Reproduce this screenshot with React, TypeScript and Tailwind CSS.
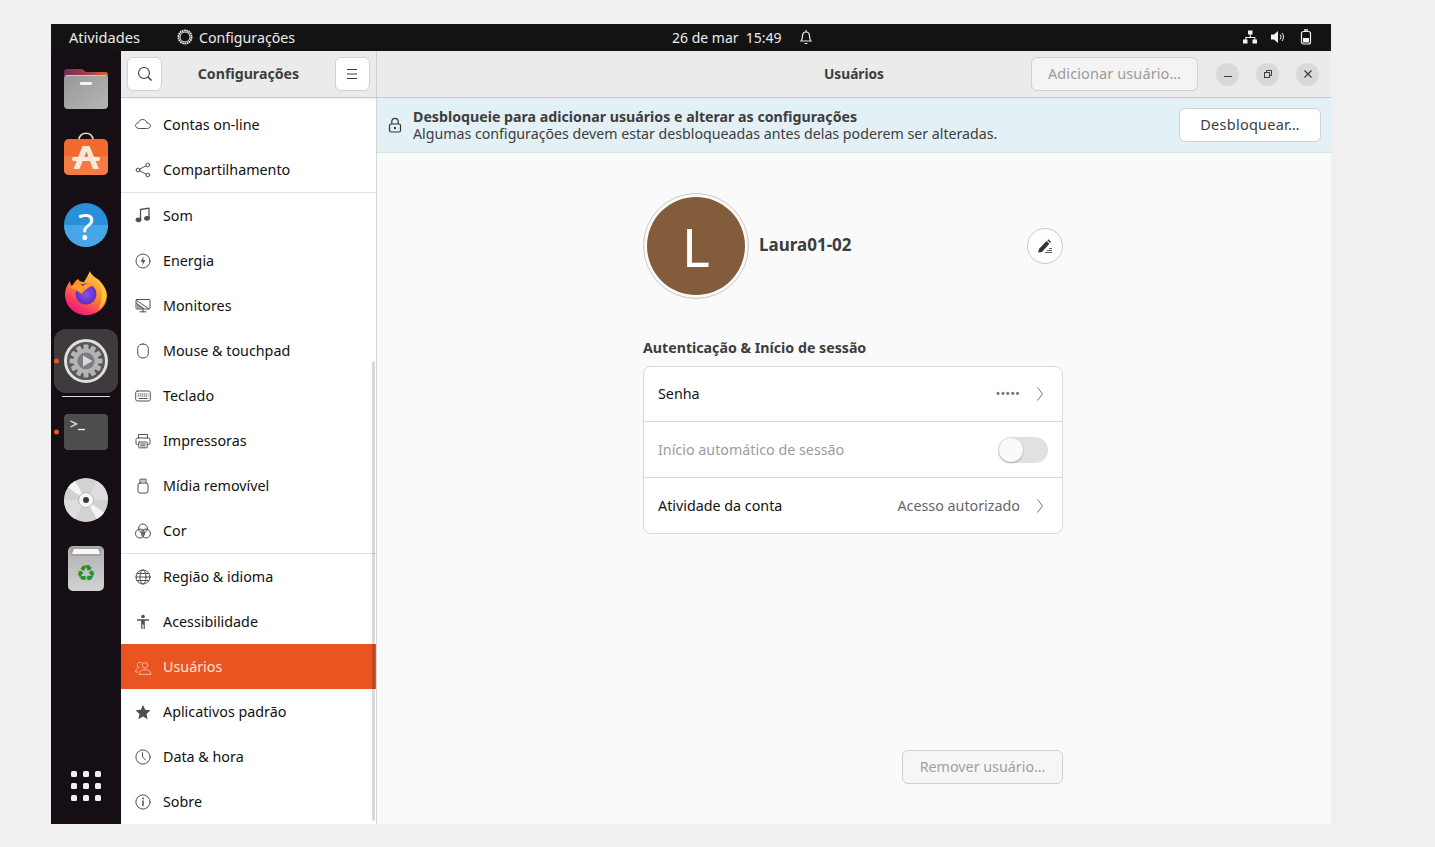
import React from 'react';

const stroke = { fill: 'none', stroke: 'currentColor', strokeWidth: 1, strokeLinecap: 'round', strokeLinejoin: 'round' } as const;

const Ico: React.FC<{ children: React.ReactNode; className?: string }> = ({ children, className }) => (
  <svg viewBox="0 0 16 16" className={className ?? 'w-4 h-4 overflow-visible'} {...stroke}>{children}</svg>
);

const icons: Record<string, React.ReactNode> = {
  cloud: <path d="M4.200 11.500C2.400 11.500.6 10.500.6 8.600c0-1.600 1.200-2.600 2.600-2.700C3.800 3.900 5.500 2.500 7.600 2.500c2.200 0 3.900 1.500 4.300 3.400 1.900 0 3.500 1.100 3.500 2.900 0 1.800-1.600 2.700-3.300 2.700z" />,
  share: <><circle cx="3" cy="8" r="1.900" /><circle cx="12.800" cy="3" r="1.900" /><circle cx="12.800" cy="13" r="1.900" /><path d="M4.700 7.100l6.400-3.200M4.700 8.900l6.400 3.200" /></>,
  music: <g strokeWidth="1.300"><path d="M5.500 11.500V1.500l8.500-1.300V10" /><ellipse cx="3.500" cy="11.800" rx="2.300" ry="1.700" fill="currentColor" /><ellipse cx="12" cy="10.300" rx="2.300" ry="1.700" fill="currentColor" /></g>,
  power: <><circle cx="8" cy="8" r="7" /><path d="M8.800 3.500L5.500 8.700h2.400l-.7 3.800 3.300-5.300H8.100z" fill="currentColor" stroke="none" /></>,
  monitor: <><rect x="1" y="1.500" width="14" height="9.500" rx="1" /><path d="M1.500 2.500l12 8M1.500 5.500l7 5M5 13.800h6M8 11v2.800" /><path d="M2 5l0 5.500h7z" fill="currentColor" stroke="none" opacity=".55" /></>,
  mouse: <path d="M8 1c-3.200 0-5.300 1.800-5.300 4.800v4.400c0 3 2.300 4.800 5.300 4.800s5.300-1.800 5.300-4.800V5.800C13.300 2.800 11.200 1 8 1z" />,
  keyboard: <><rect x=".7" y="3" width="14.600" height="10" rx="1.800" /><path d="M3 6h.6M5 6h.6M7 6h.6M9 6h.6M11 6h.6M13 6h.1M3 8h.6M5 8h.6M7 8h.6M9 8h.6M11 8h.6M13 8h.1M4 10.500h8" /></>,
  printer: <><path d="M3.500 5V1.500h9V5M3.500 11.500H2.500a1.500 1.500 0 01-1.500-1.500V6.500A1.500 1.500 0 012.500 5h11A1.500 1.500 0 0115 6.500V10a1.500 1.500 0 01-1.500 1.500h-1" /><rect x="3.800" y="9" width="8.400" height="5.800" rx=".5" /><path d="M5.800 11h4.400M5.800 12.800h4.400" /></>,
  usb: <><rect x="3" y="5" width="10" height="10" rx="2" /><path d="M5 5V1.200h6V5M6.800 3h.4M8.800 3h.4" /></>,
  color: <><circle cx="8" cy="5.500" r="4.500" /><circle cx="5" cy="10.500" r="4.500" /><circle cx="11" cy="10.500" r="4.500" /><path d="M4.500 6.500a4.500 4.500 0 007 0A4.500 4.500 0 008 14 4.500 4.500 0 004.500 6.500z" fill="currentColor" stroke="none" opacity=".7" /></>,
  globe: <><circle cx="8" cy="8" r="7" /><ellipse cx="8" cy="8" rx="3" ry="7" /><path d="M1 8h14M2 4.500h12M2 11.500h12" /></>,
  access: <g fill="currentColor" stroke="none"><circle cx="8" cy="2.500" r="1.800" /><path d="M2 5.300h12v1.400h-4.200V15H8.600v-4.500H7.400V15H6.200V6.700H2z" /></g>,
  users: <><circle cx="10" cy="6.300" r="2.800" /><path d="M4 15c.3-3 2.600-4.300 6-4.300s5.700 1.300 6 4.300zM7 3.800A2.800 2.800 0 104.200 8.500C2 9.100.6 10.800.5 13h2.200" /></>,
  star: <path d="M8 .8l2.200 4.900 5.300.6-4 3.600 1.100 5.300L8 12.500l-4.600 2.700 1.100-5.300-4-3.600 5.300-.6z" fill="currentColor" stroke="none" />,
  clock: <><circle cx="8" cy="8" r="7.100" /><path d="M7.500 3.700v4.200l3 3" /></>,
  info: <><circle cx="8" cy="8" r="7.100" /><path d="M8 7v4.500" strokeWidth="1.500" /><circle cx="8" cy="4.500" r=".9" fill="currentColor" stroke="none" /></>,
};

type Row = { icon: string; label: string; active?: boolean };
const groups: Row[][] = [
  [{ icon: 'cloud', label: 'Contas on-line' }, { icon: 'share', label: 'Compartilhamento' }],
  [
    { icon: 'music', label: 'Som' },
    { icon: 'power', label: 'Energia' },
    { icon: 'monitor', label: 'Monitores' },
    { icon: 'mouse', label: 'Mouse & touchpad' },
    { icon: 'keyboard', label: 'Teclado' },
    { icon: 'printer', label: 'Impressoras' },
    { icon: 'usb', label: 'Mídia removível' },
    { icon: 'color', label: 'Cor' },
  ],
  [
    { icon: 'globe', label: 'Região & idioma' },
    { icon: 'access', label: 'Acessibilidade' },
    { icon: 'users', label: 'Usuários', active: true },
    { icon: 'star', label: 'Aplicativos padrão' },
    { icon: 'clock', label: 'Data & hora' },
    { icon: 'info', label: 'Sobre' },
  ],
];

const FilesIcon = () => (
  <svg viewBox="0 0 44 44" className="w-11 h-11">
    <defs>
      <linearGradient id="fb" x1="0" x2="1"><stop offset="0" stopColor="#7a2a58" /><stop offset=".6" stopColor="#a8434a" /><stop offset="1" stopColor="#e8602a" /></linearGradient>
      <linearGradient id="ff" x1="0" x2="1" y1="0" y2="1"><stop offset="0" stopColor="#979797" /><stop offset="1" stopColor="#b6b6b6" /></linearGradient>
    </defs>
    <path d="M0 5a3 3 0 013-3h15l4 3h19a3 3 0 013 3v10H0z" fill="url(#fb)" />
    <rect y="8" width="44" height="34" rx="4" fill="url(#ff)" />
    <rect x="2" y="8" width="40" height="1" fill="#c9c9c9" />
    <rect x="16" y="15" width="12" height="3" rx="1" fill="#f4f4f4" />
  </svg>
);

const StoreIcon = () => (
  <svg viewBox="0 3 44 44" className="w-11 h-11 overflow-visible">
    <path d="M15 8c0-9 14-9 14 0" fill="none" stroke="#f3d9b8" strokeWidth="1.600" />
    <rect y="7" width="44" height="36" rx="5" fill="#f2692f" />
    <path d="M0 24h44v14a5 5 0 01-5 5H5a5 5 0 01-5-5z" fill="#f47c42" />
    <path d="M18.500 14h7L35 37h-6l-6.600-17.500L15.500 37h-6z" fill="#fde8dc" />
    <rect x="8" y="25" width="28" height="4" rx="2" fill="#fde8dc" />
  </svg>
);

const HelpIcon = () => (
  <div className="relative w-11 h-11 rounded-full overflow-hidden bg-[#2a8fd8] flex items-center justify-center">
    <span className="absolute left-0 right-0 bottom-0 h-[22px] bg-[#46a6e6]" />
    <span className="relative text-white text-[37px] leading-none">?</span>
  </div>
);

const FirefoxIcon = () => (
  <svg viewBox="0 0 44 44" className="w-11 h-11">
    <defs>
      <linearGradient id="fx" x1="0.8" y1="0" x2="0.2" y2="1"><stop offset="0" stopColor="#ffd84a" /><stop offset=".45" stopColor="#ff8a2a" /><stop offset=".8" stopColor="#f8306a" /><stop offset="1" stopColor="#e31587" /></linearGradient>
      <radialGradient id="fp"><stop offset="0" stopColor="#8b4ff0" /><stop offset="1" stopColor="#5b2fc0" /></radialGradient>
    </defs>
    <path d="M26 0c1 4 5 6 9 9 5 5 8 11 8 15 0 12-9 20-21 20S1 35 1 23c0-5 2-9 5-13 0 3 1 4 2 5 2-3 4-6 6-7 1 2 3 3 6 3 2-3 4-7 6-11z" fill="url(#fx)" />
    <path d="M36 11c4 5 6 9 6 13 0 6-3 11-8 15 4-6 5-14 2-28z" fill="#ffc83a" />
    <circle cx="22" cy="23" r="10.500" fill="url(#fp)" />
    <path d="M6 16c5-3 9-3 13-1 4-4 10-3 13 1-4-2-8 0-9 2-3 1-4 3-5 5-4-3-8-5-12-7z" fill="#ff9a2e" />
  </svg>
);

const SettingsIcon = () => {
  const teeth = Array.from({ length: 12 }, (_, i) => i * 30);
  return (
    <svg viewBox="0 0 44 44" className="w-11 h-11">
      <circle cx="22" cy="22" r="20.500" fill="#58565a" stroke="#dedede" strokeWidth="3" />
      {teeth.map((a) => (
        <rect key={a} x="19.500" y="5.500" width="5" height="6" rx="1" fill="#b4b4b4" transform={`rotate(${a} 22 22)`} />
      ))}
      <circle cx="22" cy="22" r="12.500" fill="#b4b4b4" />
      <circle cx="22" cy="22" r="8.500" fill="#7e7c80" />
      <path d="M19 16.500L28.500 22 19 27.500z" fill="#d8d8d8" />
    </svg>
  );
};

const TerminalIcon = () => (
  <svg viewBox="0 0 44 36" className="w-11 h-9">
    <rect x=".3" y=".3" width="43.400" height="35.400" rx="4" fill="#4d4d4d" stroke="#5f5f5f" strokeWidth=".6" />
    <path d="M6.500 7l6 3-6 3" fill="none" stroke="#f2f2f2" strokeWidth="1.300" />
    <path d="M14 15.500h7" stroke="#f2f2f2" strokeWidth="1.300" />
  </svg>
);

const DiscIcon = () => (
  <svg viewBox="0 0 44 44" className="w-11 h-11">
    <circle cx="22" cy="22" r="22" fill="#d2d2d2" />
    <path d="M22 22L44 22A22 22 0 0033 3zM22 22L0 22a22 22 0 0011 19z" fill="#dddddd" />
    <path d="M22 22L3.800 9.600A22 22 0 0111 3zM22 22l18.200 12.400A22 22 0 0133 41z" fill="#f4f4f4" />
    <circle cx="22" cy="22" r="7.500" fill="#f5f5f5" stroke="#c2b8a4" strokeWidth="1" />
    <circle cx="22" cy="22" r="3" fill="#3a3a3a" />
  </svg>
);

const TrashIcon = () => (
  <div className="relative w-9 h-[45px] rounded-[5px] bg-gradient-to-b from-[#b0b0b0] to-[#d2d2d2] flex items-center justify-center overflow-hidden">
    <svg viewBox="0 0 36 45" className="absolute inset-0 w-9 h-[45px]">
      <path d="M2 1h32l-1 9H3z" fill="#a2a2a2" />
      <path d="M6 3h24l2 5H4z" fill="#f8f8f8" />
    </svg>
    <span className="relative mt-[12px] font-['DejaVu_Sans',sans-serif] text-[22px] leading-none text-[#23912a] font-bold">♻</span>
  </div>
);

const Dot = () => <span className="absolute left-[3px] top-1/2 -translate-y-1/2 w-[5px] h-[5px] rounded-full bg-[#e95420]" />;

const DockItem: React.FC<{ children: React.ReactNode; running?: boolean }> = ({ children, running }) => (
  <div className="relative h-[68px] w-full flex items-center justify-center">
    {running && <Dot />}
    {children}
  </div>
);

const Dock = () => (
  <aside className="w-[70px] shrink-0 bg-[#150f15] flex flex-col pt-[4px] pb-[23px]">
    <DockItem><FilesIcon /></DockItem>
    <DockItem><StoreIcon /></DockItem>
    <DockItem><HelpIcon /></DockItem>
    <DockItem><FirefoxIcon /></DockItem>
    <DockItem running>
      <div className="w-16 h-16 rounded-[12px] bg-[#3e3a3e] flex items-center justify-center"><SettingsIcon /></div>
    </DockItem>
    <div className="h-px bg-[#d8d8d8] mx-[11px] mb-[2px] mt-px" />
    <div className="-mt-[1px]">
      <DockItem running><TerminalIcon /></DockItem>
      <DockItem><DiscIcon /></DockItem>
      <DockItem><TrashIcon /></DockItem>
    </div>
    <div className="mt-auto mx-auto grid grid-cols-3 gap-[6px]">
      {Array.from({ length: 9 }).map((_, i) => (
        <span key={i} className="w-[6px] h-[6px] rounded-[1.500px] bg-[#f0f0f0]" />
      ))}
    </div>
  </aside>
);

const TopBar = () => (
  <header className="h-[27px] bg-[#131313] text-[#ececec] flex items-center text-[14.2px] shrink-0">
    <div className="w-[621px] shrink-0 flex items-center pl-[18px]">
      <span className="w-[108px] text-[14.6px]">Atividades</span>
      <svg viewBox="0 0 16 16" className="w-4 h-4 mr-[6px]" fill="none" stroke="#ececec">
        <circle cx="8" cy="8" r="6.600" strokeWidth="1.800" strokeDasharray="1.700 .6" />
        <circle cx="8" cy="8" r="5" strokeWidth="1" />
      </svg>
      <span>Configurações</span>
    </div>
    <span className="whitespace-pre text-[14px] mb-[1px]">26 de mar  15:49</span>
    <svg viewBox="0 0 16 16" className="w-4 h-4 ml-[16px] mb-[2px]" fill="none" stroke="#ececec" strokeWidth="1.200">
      <path d="M3 12c1.200-1.500 1.500-2.500 1.500-5 0-2.300 1.400-4 3.500-4s3.500 1.700 3.500 4c0 2.500.3 3.500 1.500 5zM6.500 14.500h3M8 1v2" />
    </svg>
    <div className="ml-auto flex items-center gap-[12px] pr-[17px] mb-[2px]">
      <svg viewBox="0 0 16 16" className="w-4 h-4" fill="#f2f2f2">
        <rect x="6" y="1.500" width="4.500" height="4" /><rect x="1" y="10.500" width="4.500" height="4" /><rect x="10.500" y="10.500" width="4.500" height="4" />
        <path d="M7.800 5h1v3h4.500v3h-1V9h-8v2h-1V8h4.500z" />
      </svg>
      <svg viewBox="0 0 16 16" className="w-4 h-4" fill="#f2f2f2">
        <path d="M1 5.500h3L8 2v12l-4-3.500H1z" />
        <path d="M10 5.500a3.500 3.500 0 010 5M12 4a6 6 0 010 8" fill="none" stroke="#f2f2f2" strokeWidth="1" />
      </svg>
      <svg viewBox="0 0 16 16" className="w-4 h-4" fill="none" stroke="#f2f2f2" strokeWidth="1.200">
        <rect x="3.500" y="2.500" width="9" height="12.500" rx="2" />
        <path d="M6 1h4" strokeWidth="1.500" />
        <rect x="5" y="9" width="6" height="4.500" fill="#f2f2f2" stroke="none" />
      </svg>
    </div>
  </header>
);

const HeaderButton: React.FC<{ children: React.ReactNode }> = ({ children }) => (
  <button className="w-[35px] h-[34px] bg-white border border-[#d0d0d0] rounded-[6px] flex items-center justify-center text-[#3d3d3d]">{children}</button>
);

const Sidebar = () => (
  <div className="w-[256px] shrink-0 flex flex-col border-r border-[#d6d6d6] relative bg-white">
    <div className="h-[47px] shrink-0 bg-[#ebebeb] border-b border-[#c9c9c9] flex items-center justify-between px-[6px] shadow-[0_1px_3px_rgba(0,0,0,0.08)]">
      <HeaderButton>
        <svg viewBox="0 0 16 16" className="w-4 h-4" fill="none" stroke="currentColor" strokeWidth="1.100"><circle cx="7" cy="7" r="5.500" /><path d="M11 11l3.500 3.500" strokeWidth="1.500" /></svg>
      </HeaderButton>
      <span className="font-bold text-[#3d3d3d] text-[14.2px]">Configurações</span>
      <HeaderButton>
        <svg viewBox="0 0 16 16" className="w-4 h-4" stroke="currentColor" strokeWidth="1.100"><path d="M3 3.500h10M3 8h10M3 12.500h10" /></svg>
      </HeaderButton>
    </div>
    <nav className="flex-1 pt-[4px] flex flex-col">
      {groups.map((g, gi) => (
        <div key={gi} className={gi > 0 ? 'border-t border-[#e2e2e2]' : ''}>
          {g.map((r) => (
            <div
              key={r.label}
              className={`h-[45px] flex items-center pl-[14px] gap-[12px] text-[14.3px] ${r.active ? 'bg-[#e95420] text-[#fde4d8]' : 'text-[#111111]'}`}
            >
              <span className={r.active ? 'text-[#f8b79f]' : 'text-[#4f4f4f]'}>
                <Ico>{icons[r.icon]}</Ico>
              </span>
              {r.label}
            </div>
          ))}
        </div>
      ))}
    </nav>
    <div className="absolute right-[1px] top-[310px] bottom-[3px] w-[3px] rounded-full bg-[#000000]/15" />
  </div>
);

const WinButton: React.FC<{ children: React.ReactNode }> = ({ children }) => (
  <button className="w-[23px] h-[23px] rounded-full bg-[#d9d9d9] flex items-center justify-center text-[#3d3d3d]">{children}</button>
);

const Chevron = () => (
  <svg viewBox="0 0 8 16" className="w-2 h-4 text-[#777777]" fill="none" stroke="currentColor" strokeWidth="1"><path d="M1.500 1.500L6.500 8l-5 6.500" /></svg>
);

const Main = () => (
  <main className="flex-1 flex flex-col min-w-0 bg-[#fafafa]">
    <div className="h-[47px] shrink-0 bg-[#ebebeb] border-b border-[#c9c9c9] flex items-center relative pr-[12px]">
      <span className="absolute left-0 right-0 text-center font-bold text-[#3d3d3d] text-[13.7px]">Usuários</span>
      <button className="relative ml-auto w-[167px] h-[34px] bg-[#f4f4f4] border border-[#d0d0d0] rounded-[6px] text-[#9b9b9b] text-[14.5px] tracking-[0.1px]">Adicionar usuário…</button>
      <div className="relative ml-[18px] flex gap-[17px]">
        <WinButton><span className="w-[8px] h-px bg-current mt-[5px]" /></WinButton>
        <WinButton>
          <svg viewBox="0 0 10 10" className="w-[10px] h-[10px]" fill="none" stroke="currentColor"><rect x="1.500" y="3.500" width="5" height="5" /><path d="M3.500 3.500v-2h5v5h-2" /></svg>
        </WinButton>
        <WinButton>
          <svg viewBox="0 0 10 10" className="w-[10px] h-[10px]" fill="none" stroke="currentColor" strokeWidth="1.200"><path d="M1.500 1.500l7 7M8.500 1.500l-7 7" /></svg>
        </WinButton>
      </div>
    </div>

    <div className="h-[55px] shrink-0 bg-[#e3f0f5] border-b border-[#d9dfe2] flex items-center pl-[10px] pr-[10px]">
      <svg viewBox="0 0 16 16" className="w-4 h-4 text-[#333333] shrink-0" fill="none" stroke="currentColor" strokeWidth="1.200">
        <rect x="2.500" y="7" width="11" height="8" rx="1.500" /><path d="M4.800 7V4.500a3.200 3.200 0 016.400 0V7" /><path d="M7 11h2" strokeWidth="2" />
      </svg>
      <div className="ml-[10px] text-[14.2px] leading-[17px]">
        <div className="font-bold text-[#3d3d3d]">Desbloqueie para adicionar usuários e alterar as configurações</div>
        <div className="text-[#3d3d3d]">Algumas configurações devem estar desbloqueadas antes delas poderem ser alteradas.</div>
      </div>
      <button className="ml-auto w-[142px] h-[34px] bg-white border border-[#d0d0d0] rounded-[6px] text-[#3d3d3d] text-[14.5px] tracking-[0.25px]">Desbloquear…</button>
    </div>

    <div className="flex-1 w-[420px] ml-[266px] flex flex-col pt-[40px] pb-[40px]">
      <div className="flex items-center">
        <div className="w-[106px] h-[106px] rounded-full border border-[#c8c8c8] flex items-center justify-center shrink-0">
          <div className="w-[98px] h-[98px] rounded-full bg-[#835c3b] flex items-center justify-center text-white text-[53px] leading-none">L</div>
        </div>
        <span className="ml-[10px] mb-[2px] font-bold text-[17px] text-[#3d3d3d]">Laura01-02</span>
        <button className="ml-auto w-[36px] h-[36px] rounded-full border border-[#c8c8c8] bg-white flex items-center justify-center">
          <svg viewBox="0 0 16 16" className="w-4 h-4" fill="#333333">
            <path d="M1 14.500l1.200-3.800L9.500 3l2.800 2.800L5 14z" /><path d="M10.300 2.200l1-1 2.800 2.800-1 1z" />
            <path d="M8 14.500h7M10 12.500h5M12 10.500h3" stroke="#333333" strokeWidth=".8" />
          </svg>
        </button>
      </div>
      <h2 className="mt-[39px] mb-[8px] font-bold text-[14.2px] leading-[20px] text-[#3d3d3d]">Autenticação &amp; Início de sessão</h2>
      <div className="bg-white border border-[#d9d9d9] rounded-[8px] text-[14.3px] divide-y divide-[#d9d9d9]">
        <div className="h-[55px] flex items-center pl-[14px] pr-[18px] text-[#111111]">
          <span>Senha</span>
          <span className="ml-auto mr-[16px] text-[#777777] text-[13px]">•••••</span>
          <Chevron />
        </div>
        <div className="h-[56px] flex items-center pl-[14px] pr-[14px] text-[#9c9c9c]">
          <span>Início automático de sessão</span>
          <span className="ml-auto w-[50px] h-[26px] rounded-full bg-[#e1e1e1] flex items-center">
            <span className="w-[24px] h-[24px] ml-px rounded-full bg-[#fafafa] shadow-[0_1px_2px_rgba(0,0,0,0.3)]" />
          </span>
        </div>
        <div className="h-[55px] flex items-center pl-[14px] pr-[18px] text-[#111111]">
          <span>Atividade da conta</span>
          <span className="ml-auto mr-[16px] text-[#666666]">Acesso autorizado</span>
          <Chevron />
        </div>
      </div>
      <button className="mt-auto self-end w-[161px] h-[34px] bg-[#f6f6f6] border border-[#d0d0d0] rounded-[6px] text-[#a0a0a0] text-[14.3px]">Remover usuário…</button>
    </div>
  </main>
);

export default function App() {
  return (
    <div className="w-[1435px] h-[847px] bg-[#f0f0f0] pl-[51px] pr-[104px] pt-[24px] pb-[23px] font-['Noto_Sans',sans-serif] overflow-hidden">
      <div className="h-full flex flex-col">
        <TopBar />
        <div className="flex-1 flex min-h-0">
          <Dock />
          <Sidebar />
          <Main />
        </div>
      </div>
    </div>
  );
}
